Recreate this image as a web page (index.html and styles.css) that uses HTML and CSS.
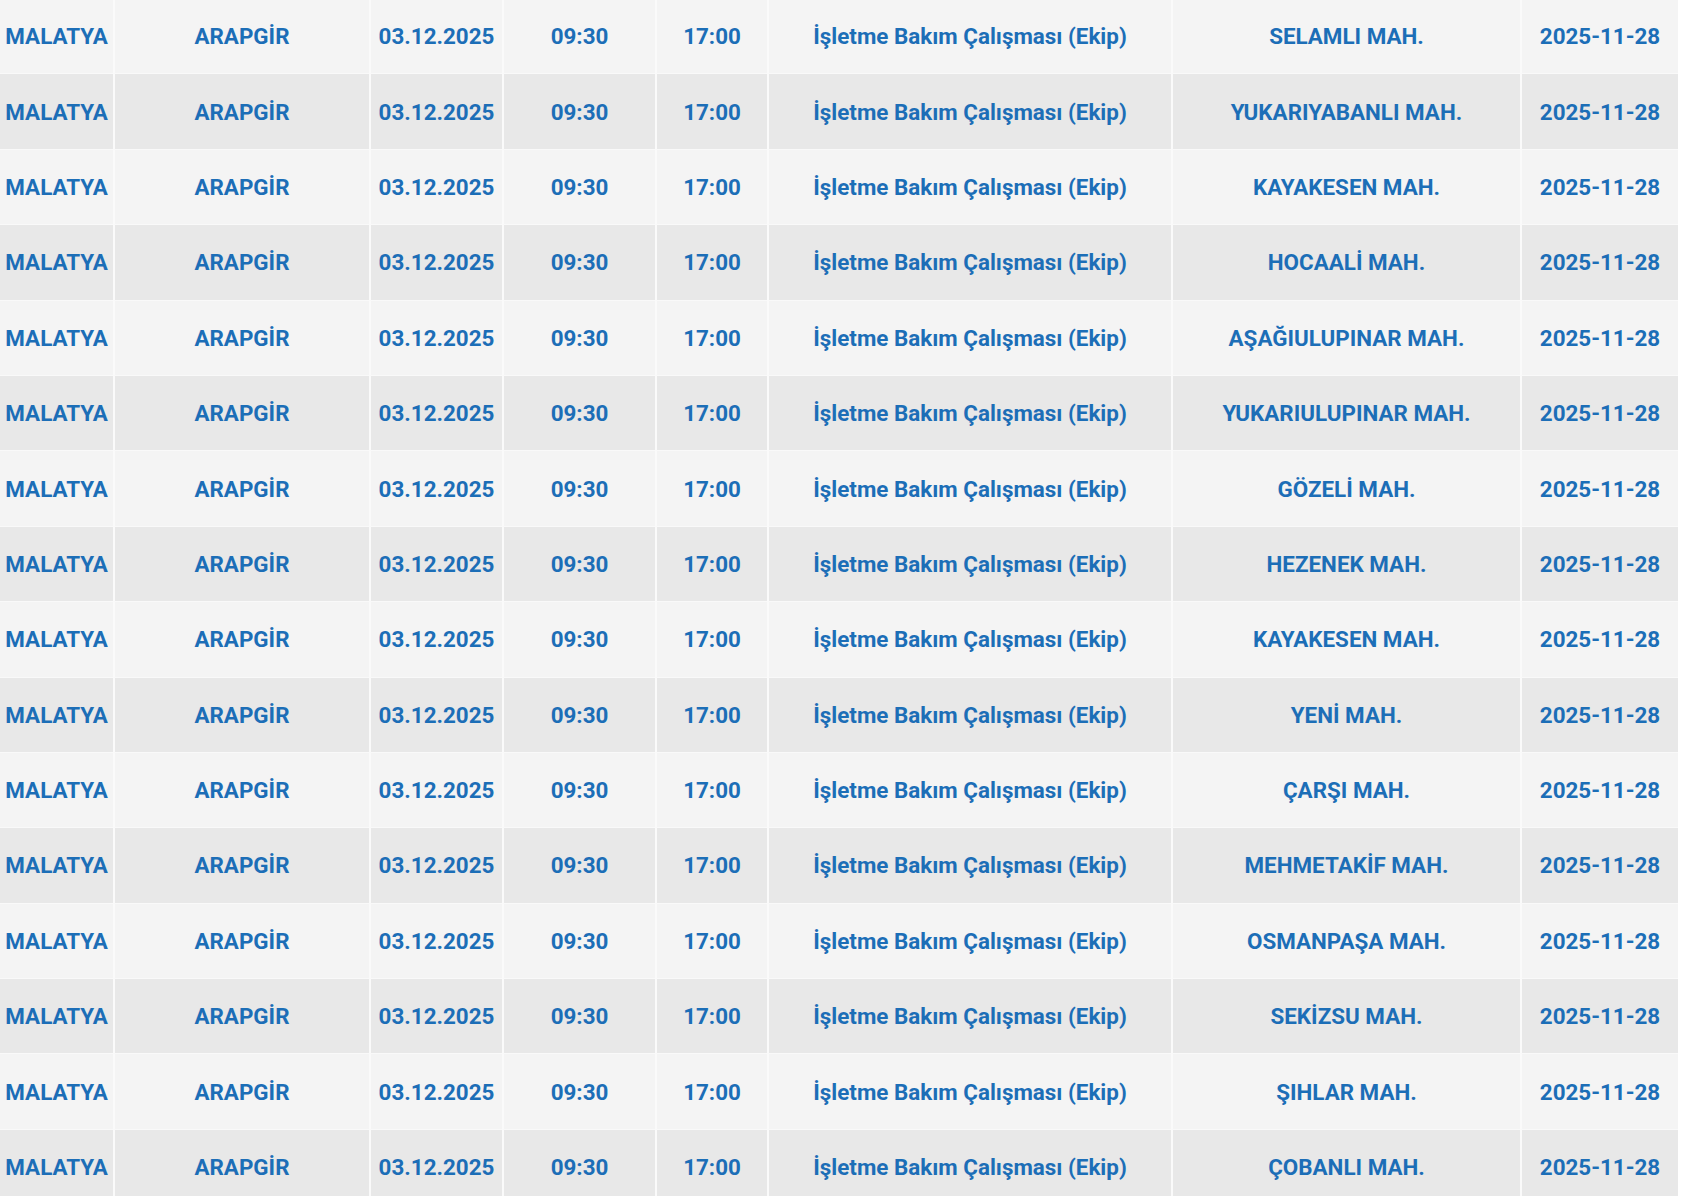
FILE: index.html
```html
<!DOCTYPE html>
<html lang="tr">
<head>
<meta charset="utf-8">
<title>Kesinti Listesi</title>
<link rel="stylesheet" href="styles.css">
</head>
<body>
<table class="outages">
<colgroup>
<col class="c-il"><col class="c-ilce"><col class="c-tarih"><col class="c-bas"><col class="c-bit"><col class="c-neden"><col class="c-mah"><col class="c-kayit">
</colgroup>
<tbody>
<tr><td>MALATYA</td><td>ARAPGİR</td><td>03.12.2025</td><td>09:30</td><td>17:00</td><td>İşletme Bakım Çalışması (Ekip)</td><td>SELAMLI MAH.</td><td>2025-11-28</td></tr>
<tr><td>MALATYA</td><td>ARAPGİR</td><td>03.12.2025</td><td>09:30</td><td>17:00</td><td>İşletme Bakım Çalışması (Ekip)</td><td>YUKARIYABANLI MAH.</td><td>2025-11-28</td></tr>
<tr><td>MALATYA</td><td>ARAPGİR</td><td>03.12.2025</td><td>09:30</td><td>17:00</td><td>İşletme Bakım Çalışması (Ekip)</td><td>KAYAKESEN MAH.</td><td>2025-11-28</td></tr>
<tr><td>MALATYA</td><td>ARAPGİR</td><td>03.12.2025</td><td>09:30</td><td>17:00</td><td>İşletme Bakım Çalışması (Ekip)</td><td>HOCAALİ MAH.</td><td>2025-11-28</td></tr>
<tr><td>MALATYA</td><td>ARAPGİR</td><td>03.12.2025</td><td>09:30</td><td>17:00</td><td>İşletme Bakım Çalışması (Ekip)</td><td>AŞAĞIULUPINAR MAH.</td><td>2025-11-28</td></tr>
<tr><td>MALATYA</td><td>ARAPGİR</td><td>03.12.2025</td><td>09:30</td><td>17:00</td><td>İşletme Bakım Çalışması (Ekip)</td><td>YUKARIULUPINAR MAH.</td><td>2025-11-28</td></tr>
<tr><td>MALATYA</td><td>ARAPGİR</td><td>03.12.2025</td><td>09:30</td><td>17:00</td><td>İşletme Bakım Çalışması (Ekip)</td><td>GÖZELİ MAH.</td><td>2025-11-28</td></tr>
<tr><td>MALATYA</td><td>ARAPGİR</td><td>03.12.2025</td><td>09:30</td><td>17:00</td><td>İşletme Bakım Çalışması (Ekip)</td><td>HEZENEK MAH.</td><td>2025-11-28</td></tr>
<tr><td>MALATYA</td><td>ARAPGİR</td><td>03.12.2025</td><td>09:30</td><td>17:00</td><td>İşletme Bakım Çalışması (Ekip)</td><td>KAYAKESEN MAH.</td><td>2025-11-28</td></tr>
<tr><td>MALATYA</td><td>ARAPGİR</td><td>03.12.2025</td><td>09:30</td><td>17:00</td><td>İşletme Bakım Çalışması (Ekip)</td><td>YENİ MAH.</td><td>2025-11-28</td></tr>
<tr><td>MALATYA</td><td>ARAPGİR</td><td>03.12.2025</td><td>09:30</td><td>17:00</td><td>İşletme Bakım Çalışması (Ekip)</td><td>ÇARŞI MAH.</td><td>2025-11-28</td></tr>
<tr><td>MALATYA</td><td>ARAPGİR</td><td>03.12.2025</td><td>09:30</td><td>17:00</td><td>İşletme Bakım Çalışması (Ekip)</td><td>MEHMETAKİF MAH.</td><td>2025-11-28</td></tr>
<tr><td>MALATYA</td><td>ARAPGİR</td><td>03.12.2025</td><td>09:30</td><td>17:00</td><td>İşletme Bakım Çalışması (Ekip)</td><td>OSMANPAŞA MAH.</td><td>2025-11-28</td></tr>
<tr><td>MALATYA</td><td>ARAPGİR</td><td>03.12.2025</td><td>09:30</td><td>17:00</td><td>İşletme Bakım Çalışması (Ekip)</td><td>SEKİZSU MAH.</td><td>2025-11-28</td></tr>
<tr><td>MALATYA</td><td>ARAPGİR</td><td>03.12.2025</td><td>09:30</td><td>17:00</td><td>İşletme Bakım Çalışması (Ekip)</td><td>ŞIHLAR MAH.</td><td>2025-11-28</td></tr>
<tr><td>MALATYA</td><td>ARAPGİR</td><td>03.12.2025</td><td>09:30</td><td>17:00</td><td>İşletme Bakım Çalışması (Ekip)</td><td>ÇOBANLI MAH.</td><td>2025-11-28</td></tr>
</tbody>
</table>
</body>
</html>
```
FILE: styles.css
```css
html, body {
  margin: 0;
  padding: 0;
  background: #ffffff;
  overflow: hidden;
}

.outages {
  margin-top: -2px;
  width: 1678px;
  table-layout: fixed;
  border-collapse: separate;
  border-spacing: 0;
  font-family: Roboto, "Liberation Sans", Arial, sans-serif;
  font-weight: 700;
  font-size: 22.4px;
  color: #1c6eb7;
}

.c-il { width: 113px; }
.c-ilce { width: 256px; }
.c-tarih { width: 133px; }
.c-bas { width: 153px; }
.c-bit { width: 112px; }
.c-neden { width: 404px; }
.c-mah { width: 349px; }
.c-kayit { width: 158px; }

.outages td {
  box-sizing: border-box;
  height: 75.4px;
  padding: 0;
  text-align: center;
  vertical-align: middle;
  white-space: nowrap;
  border-top: 1px solid #f9f9f9;
  border-left: 2px solid #fafafa;
  background: #f4f4f4;
}

.outages td:first-child {
  border-left: none;
}

.outages tr:nth-child(even) td {
  background: #e8e8e8;
}
```
